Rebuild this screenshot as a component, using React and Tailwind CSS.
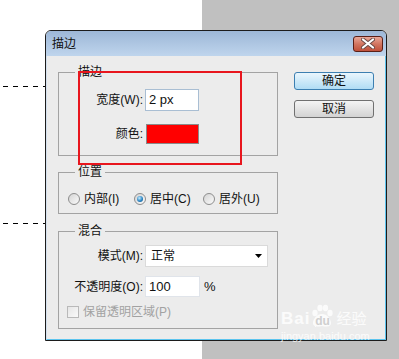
import React from "react";

function Group({ title, className = "", children }) {
  return (
    <fieldset className={"border border-[#a3a3a3] " + className}>
      <legend className="ml-[16px] px-[3px] text-[12px] leading-[16px]">
        {title}
      </legend>
      {children}
    </fieldset>
  );
}

function Radio({ checked }) {
  return (
    <span className="flex h-[12px] w-[12px] shrink-0 items-center justify-center rounded-full border border-[#8d8d8d] bg-gradient-to-br from-[#d4d4d4] to-[#fbfbfb]">
      {checked && (
        <span className="h-[6px] w-[6px] rounded-full bg-[radial-gradient(circle_at_40%_35%,#c8ecfd,#2b86c5_55%,#0f4c7d)]" />
      )}
    </span>
  );
}

function RadioOption({ label, checked, width }) {
  return (
    <div className={"flex items-center gap-[4px] " + width}>
      <Radio checked={checked} />
      <span>{label}</span>
    </div>
  );
}

function CloseButton() {
  return (
    <div className="ml-auto flex h-[16px] w-[30px] items-center justify-center rounded-[3px] border border-[#5a1f16] bg-gradient-to-b from-[#e9a899] via-[#d27560] to-[#c0503a]">
      <svg width="14" height="11" viewBox="0 0 14 11">
        <path d="M2 1.5 L12 9.5 M12 1.5 L2 9.5" stroke="#6b4a45" strokeWidth="4" strokeLinecap="round" />
        <path d="M2 1.5 L12 9.5 M12 1.5 L2 9.5" stroke="#ffffff" strokeWidth="2.2" strokeLinecap="round" />
      </svg>
    </div>
  );
}

function Watermark() {
  return (
    <div className="pointer-events-none absolute left-[281px] top-[304px] text-white/80">
      <div className="flex items-end font-['Liberation_Sans','Noto_Sans_CJK_SC',sans-serif] text-[17px] font-bold leading-[18px]">
        <span className="tracking-[1px]">Bai</span>
        <span className="relative flex h-[24px] w-[24px] items-end justify-center">
          <svg width="24" height="24" viewBox="0 0 24 24" className="absolute left-0 top-0">
            <ellipse cx="5" cy="9" rx="2.6" ry="3.2" fill="currentColor" />
            <ellipse cx="10" cy="4" rx="2.6" ry="3.2" fill="currentColor" />
            <ellipse cx="15.5" cy="4" rx="2.6" ry="3.2" fill="currentColor" />
            <ellipse cx="20" cy="9" rx="2.6" ry="3.2" fill="currentColor" />
            <path d="M12 10 C7 10 3 15 3 19 C3 23 8 23 12 22 C16 23 21 23 21 19 C21 15 17 10 12 10 Z" fill="currentColor" />
          </svg>
          <span className="relative text-[12px] leading-[14px] text-[#cfcfcf]">du</span>
        </span>
        <span className="ml-[2px] text-[15px] font-normal">经验</span>
      </div>
      <div className="mt-[2px] font-['Liberation_Sans',sans-serif] text-[11px] leading-[12px]">
        jingyan.baidu.com
      </div>
    </div>
  );
}

export default function App() {
  return (
    <div className="relative flex h-[359px] w-[399px] overflow-hidden bg-white font-['Liberation_Sans','Noto_Sans_CJK_SC',sans-serif] text-[12px] leading-[16px] text-[#111]">
      <div className="h-full w-[202px] bg-white">
        <svg width="45" height="359">
          <line x1="3" y1="86.5" x2="45" y2="86.5" stroke="#000" strokeDasharray="5 5" />
          <line x1="3" y1="223.5" x2="45" y2="223.5" stroke="#000" strokeDasharray="5 5" />
        </svg>
      </div>
      <div className="h-full flex-1 bg-[#c0c0c0]" />

      {/* dialog */}
      <div className="absolute left-[45px] top-[30px] flex h-[311px] w-[342px] flex-col overflow-hidden rounded-t-[6px] border border-[#1c1c1c] bg-[#ececec]">
        <div className="flex h-[25px] items-center bg-gradient-to-b from-[#9db7d7] to-[#bfd5ed] pl-[6px] pr-[3px]">
          <span>描边</span>
          <CloseButton />
        </div>

        <div className="flex flex-1 border-b border-l border-r border-b-[#5cc4ee] border-l-[#d3e0ee] border-r-[#5cc4ee] pl-[11px]">
          <div className="flex w-[220px] flex-col pt-[8px]">
            <Group title="描边">
              <div className="flex flex-col pb-[11px] pt-[9px]">
                <div className="flex h-[22px] items-center">
                  <span className="w-[84px] text-right">宽度(W):</span>
                  <div className="ml-[2px] flex h-[22px] w-[54px] items-center border border-[#a9bed3] bg-white pl-[3px] text-[13px]">
                    2 px
                  </div>
                </div>
                <div className="mt-[13px] flex h-[20px] items-center">
                  <span className="w-[84px] text-right">颜色:</span>
                  <div className="ml-[3px] h-[20px] w-[53px] border border-[#8a8a8a] bg-[#ff0000]" />
                </div>
              </div>
            </Group>

            <Group title="位置" className="mt-[8px]">
              <div className="flex h-[16px] items-center pl-[9px] mt-[11px] mb-[6px]">
                <RadioOption label="内部(I)" width="w-[66px]" />
                <RadioOption label="居中(C)" checked width="w-[69px]" />
                <RadioOption label="居外(U)" width="" />
              </div>
            </Group>

            <Group title="混合" className="mt-[9px]">
              <div className="flex flex-col pb-[8px] pt-[6px]">
                <div className="flex h-[22px] items-center">
                  <span className="w-[84px] text-right">模式(M):</span>
                  <div className="ml-[2px] flex h-[22px] w-[123px] items-center border border-[#dadada] bg-white pl-[5px] pr-[5px]">
                    <span>正常</span>
                    <svg width="7" height="4" viewBox="0 0 7 4" className="ml-auto">
                      <path d="M0 0 H7 L3.5 4 Z" fill="#000" />
                    </svg>
                  </div>
                </div>
                <div className="mt-[9px] flex h-[21px] items-center">
                  <span className="w-[84px] text-right">不透明度(O):</span>
                  <div className="ml-[2px] flex h-[21px] w-[55px] items-center border border-[#e0e4ea] bg-white pl-[3px] text-[13px]">
                    100
                  </div>
                  <span className="ml-[4px] text-[13px]">%</span>
                </div>
                <div className="mt-[7px] flex h-[16px] items-center pl-[8px] text-[#a2a2a2]">
                  <span className="h-[12px] w-[12px] border border-[#b9b9b9] bg-gradient-to-br from-[#e6e6e6] to-[#fafafa]" />
                  <span className="ml-[4px]">保留透明区域(P)</span>
                </div>
              </div>
            </Group>
          </div>

          <div className="ml-[16px] flex flex-col gap-[10px] pt-[16px]">
            <button className="flex h-[18px] w-[80px] items-center justify-center rounded-[3px] border border-[#3c7fb1] bg-gradient-to-b from-[#eaf6fd] to-[#b0dcf4]">
              确定
            </button>
            <button className="flex h-[18px] w-[80px] items-center justify-center rounded-[3px] border border-[#707070] bg-gradient-to-b from-[#f4f4f4] to-[#d3d3d3]">
              取消
            </button>
          </div>
        </div>
      </div>

      {/* highlight annotation */}
      <div className="pointer-events-none absolute left-[78px] top-[71px] h-[94px] w-[164px] border-2 border-[#e8161e]" />

      <Watermark />
    </div>
  );
}
